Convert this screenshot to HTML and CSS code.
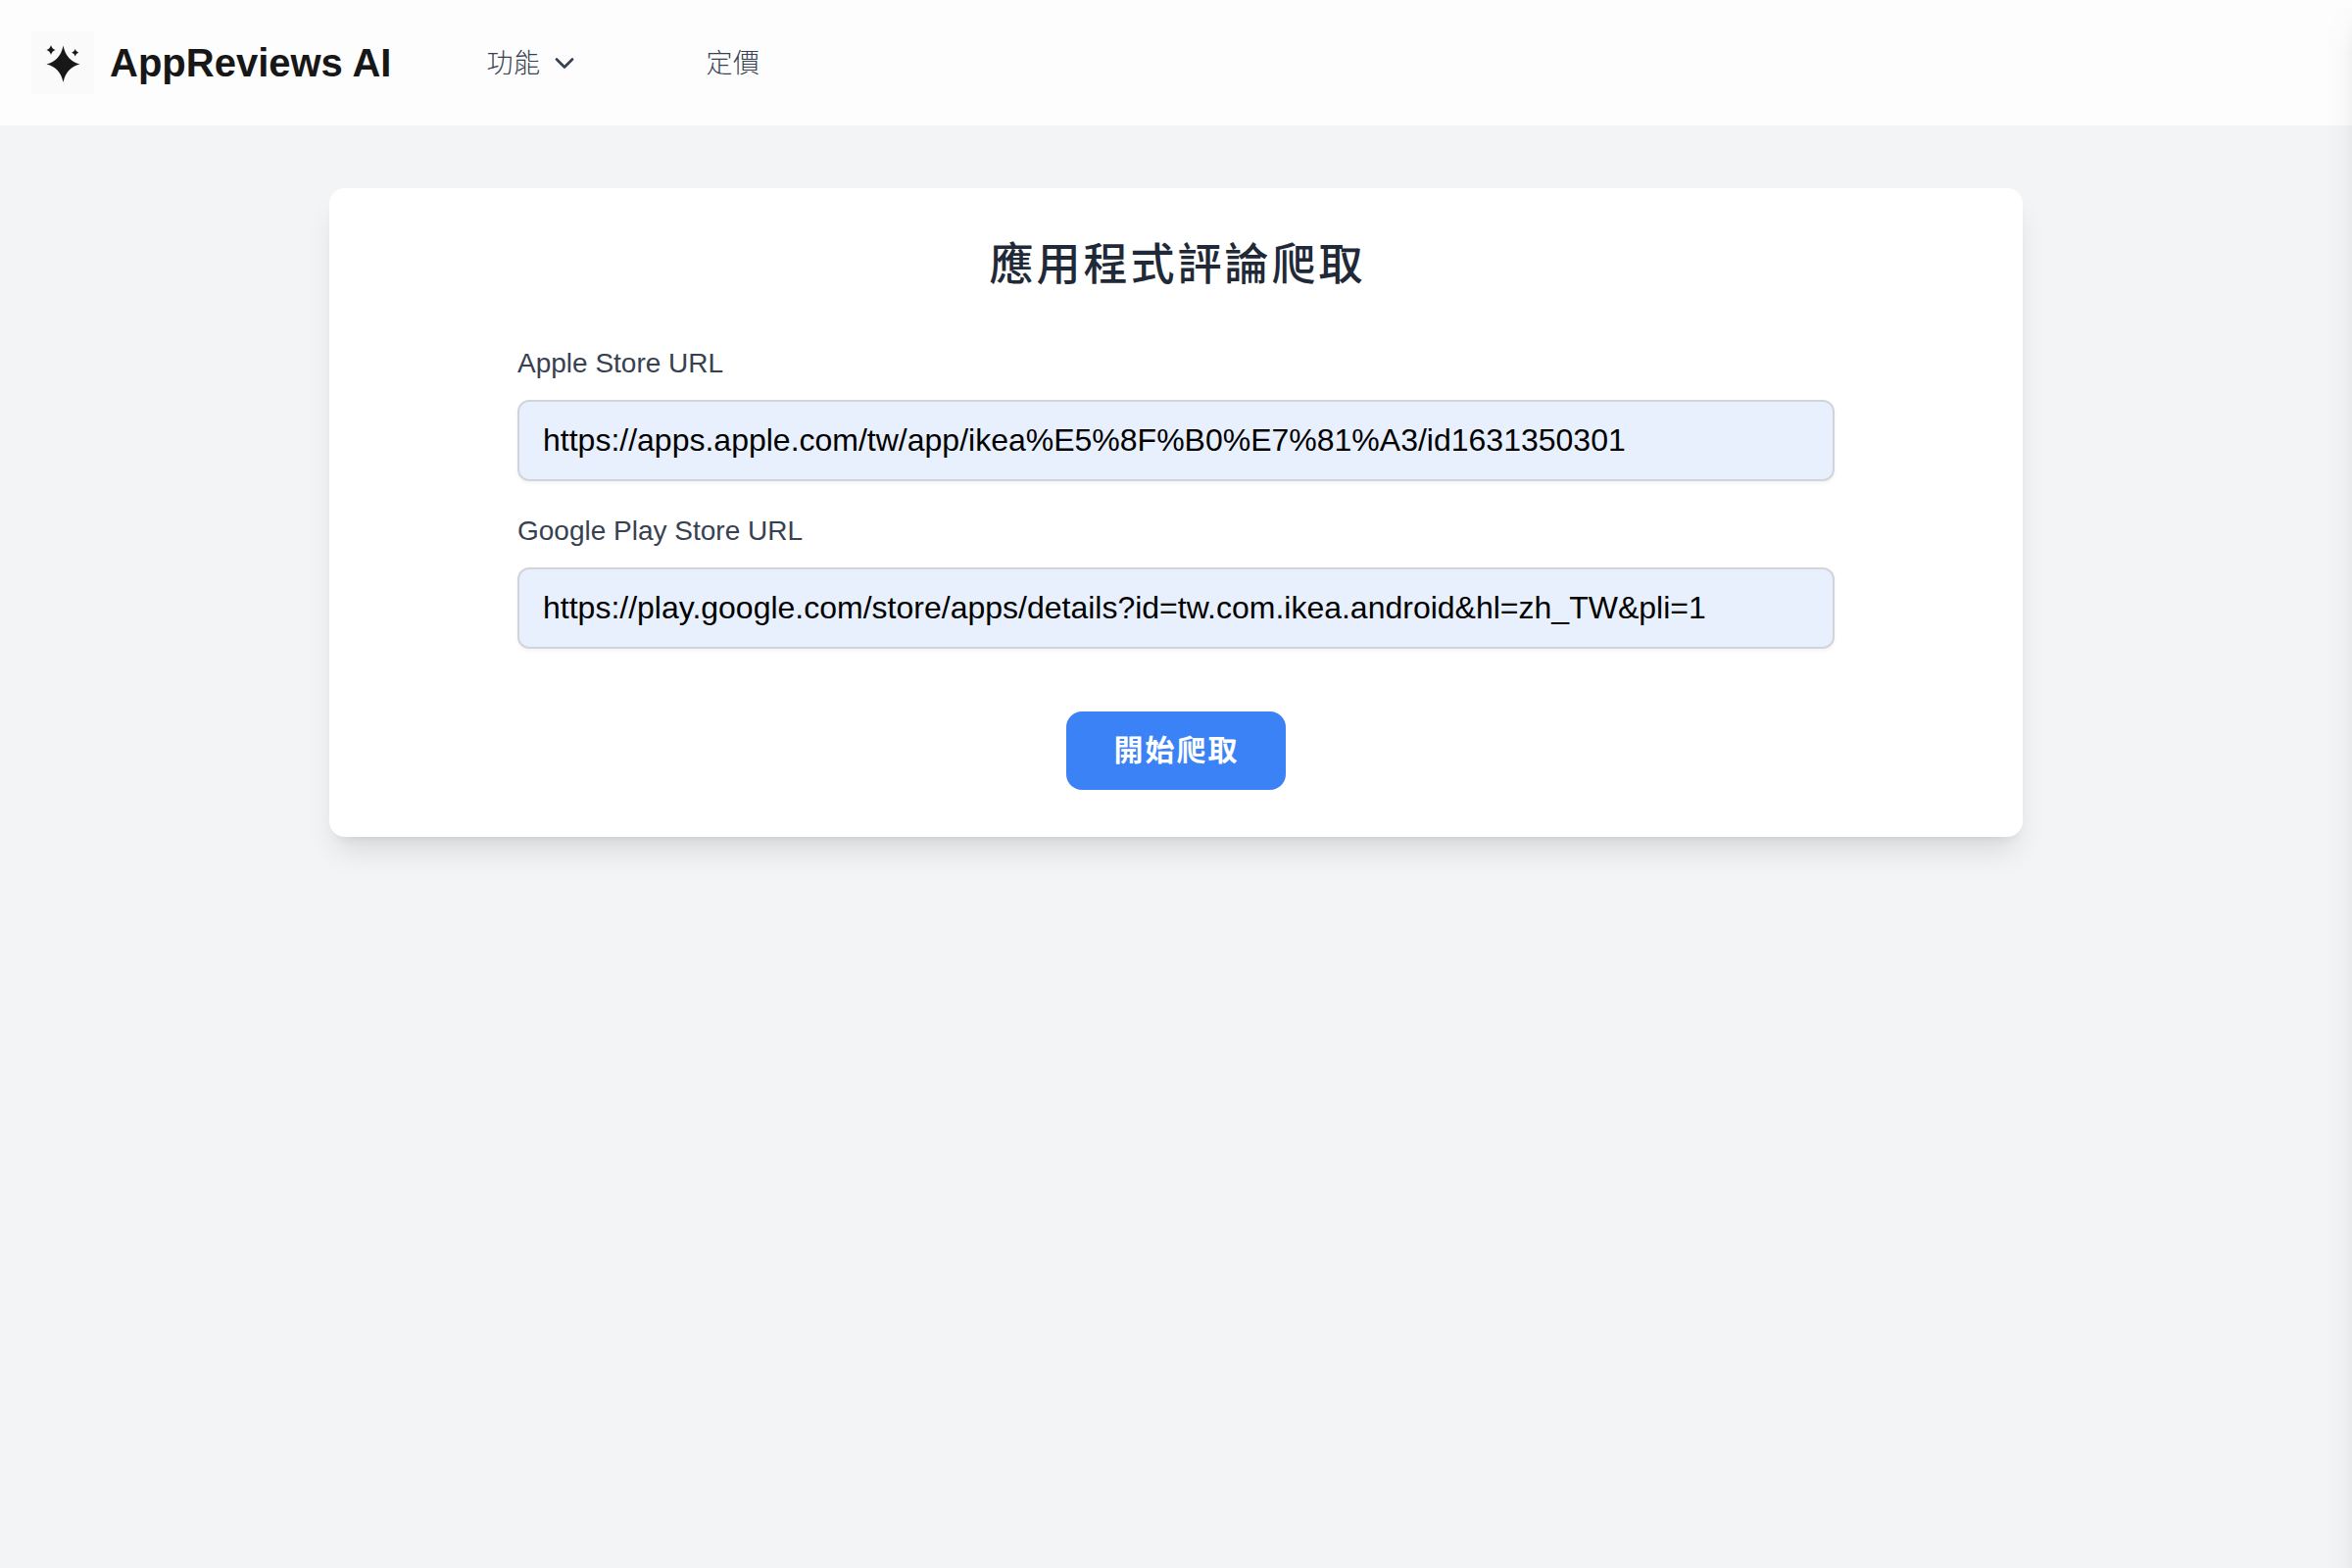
FILE: index.html
```html
<!DOCTYPE html>
<html lang="zh-Hant">
<head>
<meta charset="utf-8">
<title>AppReviews AI</title>
<link rel="stylesheet" href="styles.css">
</head>
<body>
<header class="navbar">
  <a class="brand">
    <svg class="logo" viewBox="0 0 64 64"><path d="M32.5 14.5Q35.5 30 49.500 33.500Q35.500 37 32.500 52Q29.500 37 15.500 33.500Q29.500 30 32.500 14.500ZM20 14Q21 18 24.500 19Q21 20 20 24Q19 20 15.500 19Q19 18 20 14ZM44.700 18Q45.400 21 48.200 21.700Q45.400 22.400 44.700 25.500Q44 22.400 41.200 21.700Q44 21 44.700 18Z"/></svg>
    <span class="brand-name">AppReviews AI</span>
  </a>
  <nav class="menu">
    <a class="menu-item">功能<svg class="chevron" viewBox="0 0 32 32"><path d="M8 13.500l8 8 8-8"/></svg></a>
    <a class="menu-item">定價</a>
  </nav>
</header>
<main class="page">
  <section class="card">
    <h1 class="title">應用程式評論爬取</h1>
    <form class="form">
      <label class="label" for="apple">Apple Store URL</label>
      <input class="input" id="apple" type="text" value="https://apps.apple.com/tw/app/ikea%E5%8F%B0%E7%81%A3/id1631350301">
      <label class="label" for="google">Google Play Store URL</label>
      <input class="input" id="google" type="text" value="https://play.google.com/store/apps/details?id=tw.com.ikea.android&amp;hl=zh_TW&amp;pli=1">
      <button class="submit" type="button">開始爬取</button>
    </form>
  </section>
</main>
<div class="drawer-shadow"></div>
</body>
</html>
```
FILE: styles.css
```css
* { box-sizing: border-box; }
body {
  margin: 0;
  height: 1600px;
  overflow: hidden;
  background: #f3f4f6;
  font-family: "Liberation Sans", "Noto Sans CJK TC", sans-serif;
}
.navbar {
  display: flex;
  align-items: center;
  height: 128px;
  padding: 0 32px;
  background: #fdfdfd;
}
.brand { display: flex; align-items: center; gap: 16px; }
.logo { width: 64px; height: 64px; background: #fafafa; fill: #171717; }
.brand-name { font-size: 40px; line-height: 56px; font-weight: 700; color: #171717; }
.menu { display: flex; gap: 128px; margin-left: 97px; padding-bottom: 3px; }
.menu-item {
  display: flex;
  align-items: center;
  gap: 9px;
  font-family: "Noto Sans CJK TC", sans-serif;
  font-size: 27px;
  letter-spacing: .5px;
  line-height: 40px;
  font-weight: 300;
  color: #374151;
}
.chevron {
  width: 32px;
  height: 32px;
  fill: none;
  stroke: #374151;
  stroke-width: 2.700;
  stroke-linecap: round;
  stroke-linejoin: round;
}
.page { display: flex; justify-content: center; padding-top: 64px; }
.card {
  width: 1728px;
  height: 662px;
  padding: 39px 192px 48px;
  background: #fff;
  border-radius: 16px;
  box-shadow: 0 20px 30px -6px rgba(0, 0, 0, .1), 0 8px 12px -8px rgba(0, 0, 0, .1);
}
.title {
  margin: 0 0 48px;
  padding-left: 3px;
  font-family: "Noto Sans CJK TC", sans-serif;
  font-size: 45px;
  line-height: 72px;
  letter-spacing: 3px;
  font-weight: 500;
  text-align: center;
  color: #1f2937;
}
.form { display: flex; flex-direction: column; }
.label { margin-bottom: 17px; font-size: 28px; line-height: 40px; color: #374151; }
.input {
  width: 100%;
  height: 83px;
  margin-bottom: 31px;
  padding: 0 24px;
  border: 2px solid #d1d5db;
  border-radius: 12px;
  background: #e8f0fe;
  box-shadow: 0 2px 4px rgba(0, 0, 0, .05);
  font: 32px "Liberation Sans", sans-serif;
  color: #000;
}
.submit {
  align-self: center;
  width: 224px;
  height: 80px;
  margin-top: 33px;
  padding: 0 0 6px 1px;
  border: 0;
  border-radius: 16px;
  background: #3b82f6;
  font-family: "Noto Sans CJK TC", sans-serif;
  font-size: 30px;
  line-height: 40px;
  letter-spacing: 2px;
  font-weight: 700;
  color: #fff;
}
.drawer-shadow {
  position: absolute;
  top: 0;
  right: 0;
  width: 28px;
  height: 1600px;
  background: linear-gradient(to left, rgba(0, 0, 0, .043), rgba(0, 0, 0, .025) 18%, rgba(0, 0, 0, .014) 36%, rgba(0, 0, 0, .008) 54%, rgba(0, 0, 0, .004) 75%, transparent);
  mask-image: linear-gradient(to bottom, transparent 4px, #000 54px);
}
```
